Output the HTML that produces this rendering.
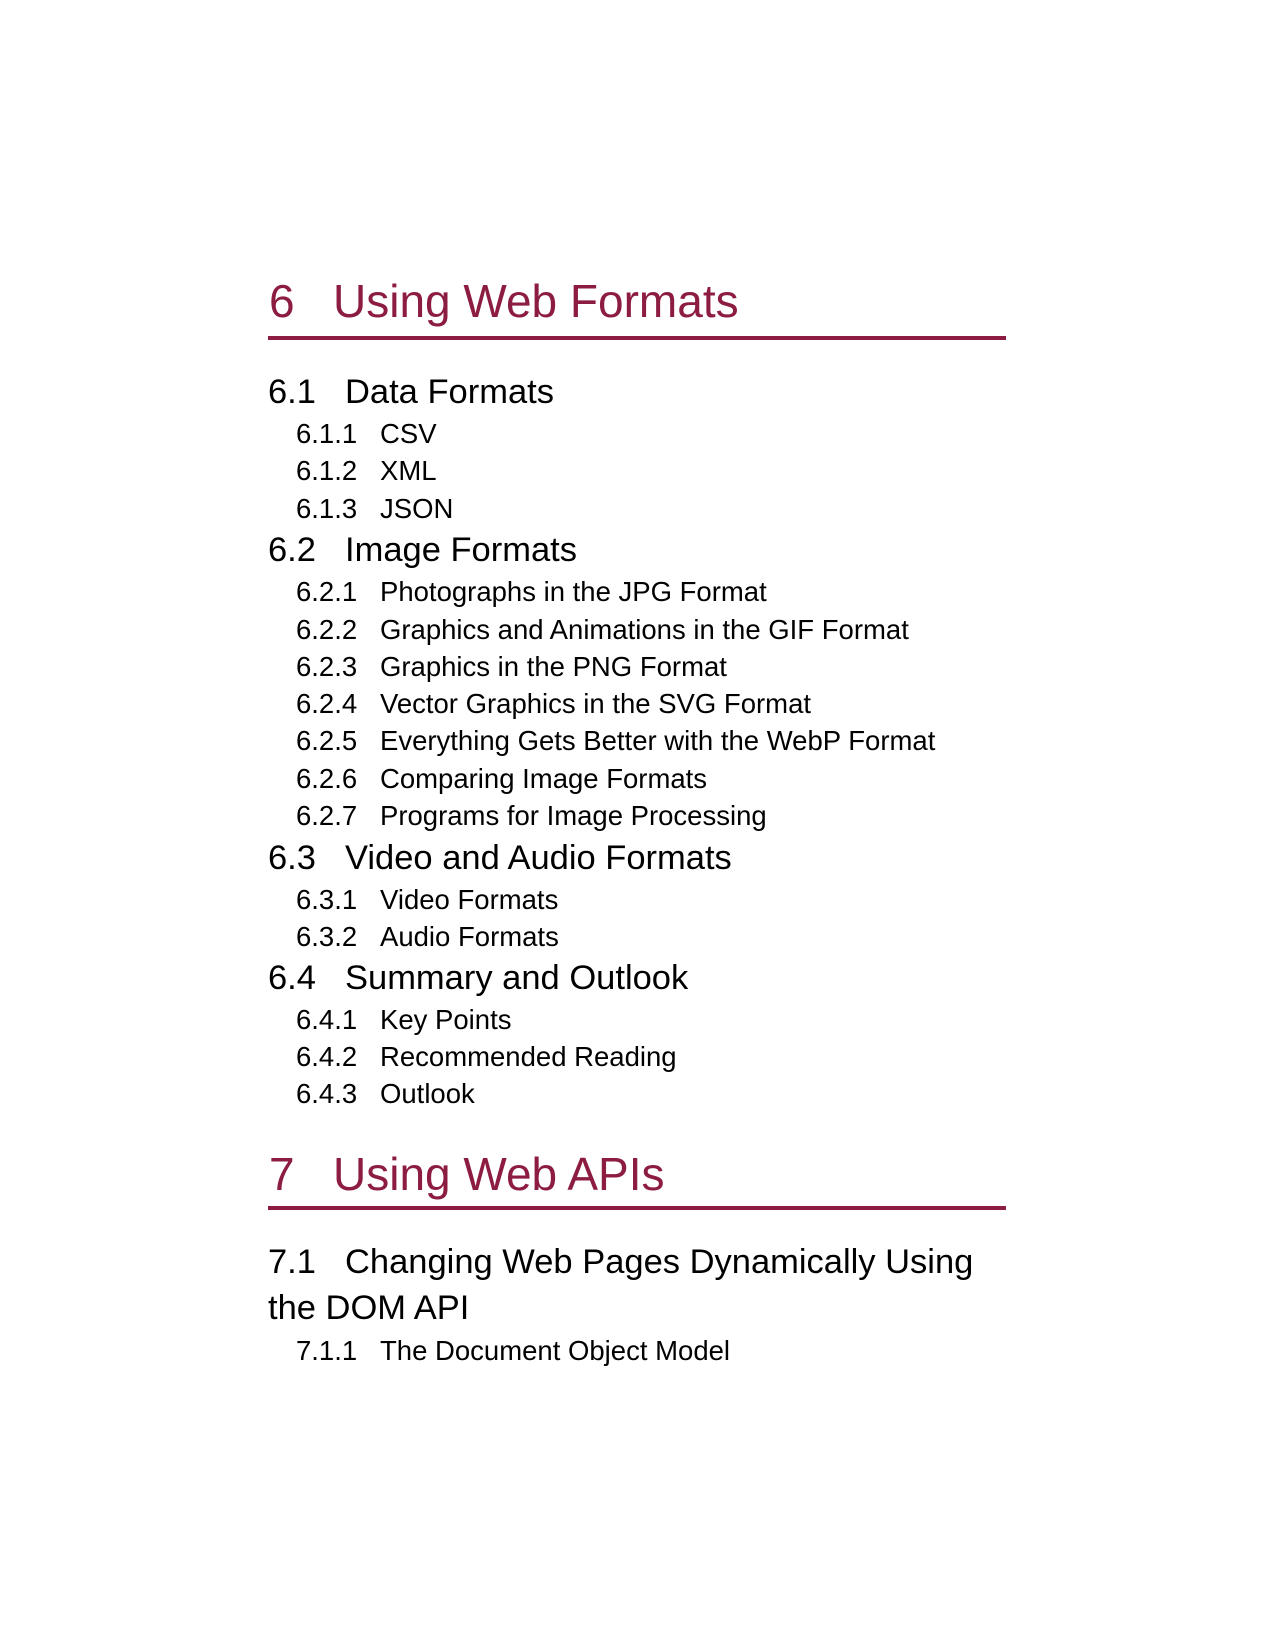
<!DOCTYPE html>
<html><head><meta charset="utf-8"><style>
html,body{margin:0;padding:0;background:#fff;}
body{width:1275px;height:1649px;position:relative;overflow:hidden;font-family:"Liberation Sans",Arial,sans-serif;color:#000;}
.t{position:absolute;line-height:1;white-space:nowrap;}
.ch{font-size:46px;color:#8c1c40;}
.sec{font-size:34.5px;}
.sub{font-size:27.5px;}
.rule{position:absolute;left:268px;width:738px;height:4px;background:#8c1c40;}
</style></head><body>
<div class="t ch" style="left:269px;top:278px">6</div>
<div class="t ch" style="left:333px;top:278px">Using Web Formats</div>
<div class="rule" style="top:336px"></div>

<div class="t sec" style="left:268px;top:375px">6.1</div><div class="t sec" style="left:345px;top:375px">Data Formats</div>
<div class="t sub" style="left:296px;top:420px">6.1.1</div><div class="t sub" style="left:380px;top:420px">CSV</div>
<div class="t sub" style="left:296px;top:457px">6.1.2</div><div class="t sub" style="left:380px;top:457px">XML</div>
<div class="t sub" style="left:296px;top:495px">6.1.3</div><div class="t sub" style="left:380px;top:495px">JSON</div>

<div class="t sec" style="left:268px;top:533px">6.2</div><div class="t sec" style="left:345px;top:533px">Image Formats</div>
<div class="t sub" style="left:296px;top:578px">6.2.1</div><div class="t sub" style="left:380px;top:578px">Photographs in the JPG Format</div>
<div class="t sub" style="left:296px;top:616px">6.2.2</div><div class="t sub" style="left:380px;top:616px">Graphics and Animations in the GIF Format</div>
<div class="t sub" style="left:296px;top:653px">6.2.3</div><div class="t sub" style="left:380px;top:653px">Graphics in the PNG Format</div>
<div class="t sub" style="left:296px;top:690px">6.2.4</div><div class="t sub" style="left:380px;top:690px">Vector Graphics in the SVG Format</div>
<div class="t sub" style="left:296px;top:727px">6.2.5</div><div class="t sub" style="left:380px;top:727px">Everything Gets Better with the WebP Format</div>
<div class="t sub" style="left:296px;top:765px">6.2.6</div><div class="t sub" style="left:380px;top:765px">Comparing Image Formats</div>
<div class="t sub" style="left:296px;top:802px">6.2.7</div><div class="t sub" style="left:380px;top:802px">Programs for Image Processing</div>

<div class="t sec" style="left:268px;top:841px">6.3</div><div class="t sec" style="left:345px;top:841px">Video and Audio Formats</div>
<div class="t sub" style="left:296px;top:886px">6.3.1</div><div class="t sub" style="left:380px;top:886px">Video Formats</div>
<div class="t sub" style="left:296px;top:923px">6.3.2</div><div class="t sub" style="left:380px;top:923px">Audio Formats</div>

<div class="t sec" style="left:268px;top:961px">6.4</div><div class="t sec" style="left:345px;top:961px">Summary and Outlook</div>
<div class="t sub" style="left:296px;top:1006px">6.4.1</div><div class="t sub" style="left:380px;top:1006px">Key Points</div>
<div class="t sub" style="left:296px;top:1043px">6.4.2</div><div class="t sub" style="left:380px;top:1043px">Recommended Reading</div>
<div class="t sub" style="left:296px;top:1080px">6.4.3</div><div class="t sub" style="left:380px;top:1080px">Outlook</div>

<div class="t ch" style="left:269px;top:1151px">7</div>
<div class="t ch" style="left:333px;top:1151px">Using Web APIs</div>
<div class="rule" style="top:1206px"></div>

<div class="t sec" style="left:268px;top:1245px">7.1</div><div class="t sec" style="left:345px;top:1245px">Changing Web Pages Dynamically Using</div>
<div class="t sec" style="left:268px;top:1291px">the DOM API</div>
<div class="t sub" style="left:296px;top:1337px">7.1.1</div><div class="t sub" style="left:380px;top:1337px">The Document Object Model</div>
</body></html>
